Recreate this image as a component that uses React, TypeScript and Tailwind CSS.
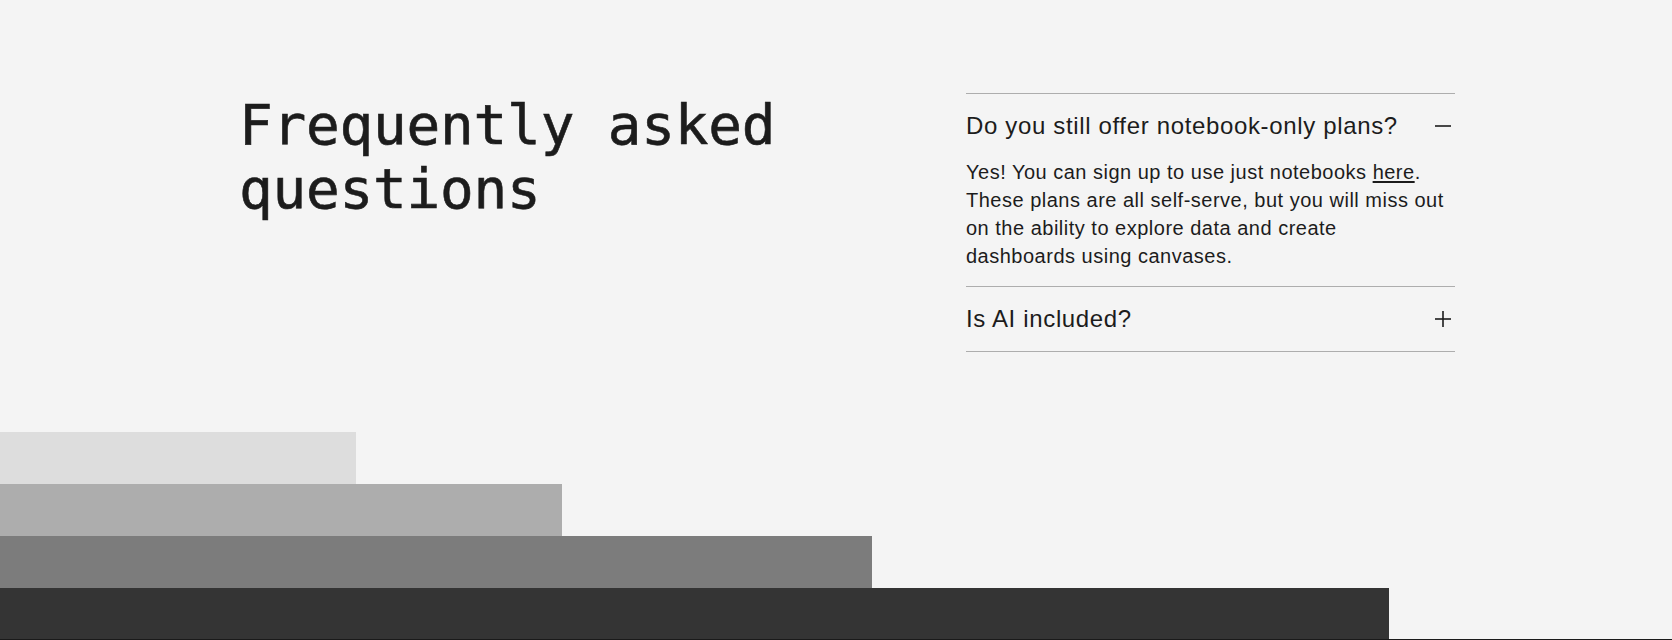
import React, { FC, useState } from 'react'

type Faq = {
  question: string
  answer: React.ReactNode
}

const faqs: Faq[] = [
  {
    question: 'Do you still offer notebook-only plans?',
    answer: (
      <>
        Yes! You can sign up to use just notebooks{' '}
        <a href="#" className="underline underline-offset-2">here</a>. These plans are all
        self-serve, but you will miss out on the ability to explore data and create
        dashboards using canvases.
      </>
    ),
  },
  {
    question: 'Is AI included?',
    answer: 'Yes. AI features are available on every plan.',
  },
]

const ToggleIcon: FC<{ open: boolean }> = ({ open }) => (
  <svg width="24" height="24" viewBox="0 0 24 24" fill="none" stroke="currentColor" strokeWidth="1.6" className="shrink-0">
    <path d="M4 12h16" />
    {!open && <path d="M12 4v16" />}
  </svg>
)

const App: FC = () => {
  const [openIndex, setOpenIndex] = useState<number | null>(0)

  return (
    <div className="h-[640px] bg-[#f4f4f4] flex flex-col text-[#1c1c1c] overflow-hidden">
      <div className="flex justify-between items-start pt-[93px] pl-[239px] pr-[217px]">
        <h2 className="text-[56px] leading-[1.15] font-['DejaVu_Sans_Mono',monospace] tracking-[-0.2px] [-webkit-text-stroke:0.6px_#1c1c1c]">
          Frequently asked
          <br />
          questions
        </h2>

        <div className="w-[489px] font-['Liberation_Sans',Arial,sans-serif]">
          {faqs.map((faq, i) => {
            const open = openIndex === i
            return (
              <div key={faq.question} className="border-t border-[#adadad] last:border-b">
                <button
                  className="w-full flex items-center justify-between py-[18px] text-left text-[24px] leading-[28px] tracking-[0.65px]"
                  onClick={() => setOpenIndex(open ? null : i)}
                >
                  <span>{faq.question}</span>
                  <ToggleIcon open={open} />
                </button>
                {open && (
                  <p className="pb-[16px] pr-[4px] text-[20px] leading-[28px] tracking-[0.5px]">
                    {faq.answer}
                  </p>
                )}
              </div>
            )
          })}
        </div>
      </div>

      {/* stepped bars along the bottom edge */}
      <div className="mt-auto flex flex-col">
        <div className="h-[52px] w-[356px] bg-[#dddddd]" />
        <div className="h-[52px] w-[562px] bg-[#adadad]" />
        <div className="h-[52px] w-[872px] bg-[#7c7c7c]" />
        <div className="h-[51px] w-[1389px] bg-[#343434]" />
        <div className="h-px w-full bg-[#1a1a1a]" />
      </div>
    </div>
  )
}

export default App
